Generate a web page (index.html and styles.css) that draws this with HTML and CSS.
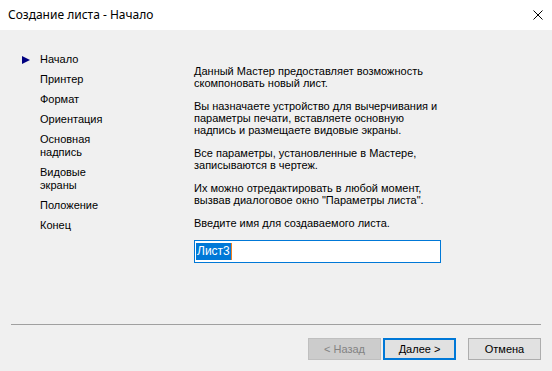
FILE: index.html
```html
<!DOCTYPE html>
<html lang="ru">
<head>
    <meta charset="UTF-8">
    <title>Создание листа - Начало</title>
    <link rel="stylesheet" href="styles.css">
</head>
<body>
    <div class="window">
        <div class="titlebar">
            <span class="title">Создание листа - Начало</span>
            <svg class="close" width="10" height="10" viewBox="0 0 10 10">
                <path d="M0.5 0.5 L9.5 9.5 M9.5 0.5 L0.5 9.5" stroke="#000" stroke-width="1" fill="none"/>
            </svg>
        </div>

        <div class="main">
            <ul class="steps">
                <li class="current"><span class="marker"></span>Начало</li>
                <li><span class="marker"></span>Принтер</li>
                <li><span class="marker"></span>Формат</li>
                <li><span class="marker"></span>Ориентация</li>
                <li><span class="marker"></span>Основная<br>надпись</li>
                <li><span class="marker"></span>Видовые<br>экраны</li>
                <li><span class="marker"></span>Положение</li>
                <li><span class="marker"></span>Конец</li>
            </ul>

            <div class="content">
                <p>Данный Мастер предоставляет возможность<br>скомпоновать новый лист.</p>
                <p>Вы назначаете устройство для вычерчивания и<br>параметры печати, вставляете основную<br>надпись и размещаете видовые экраны.</p>
                <p>Все параметры, установленные в Мастере,<br>записываются в чертеж.</p>
                <p>Их можно отредактировать в любой момент,<br>вызвав диалоговое окно "Параметры листа".</p>
                <p>Введите имя для создаваемого листа.</p>
                <div class="textbox"><span class="selected">Лист3</span><span class="caret"></span></div>
            </div>
        </div>

        <div class="footer">
            <div class="separator"></div>
            <div class="buttons">
                <button class="btn" disabled>&lt; Назад</button>
                <button class="btn default">Далее &gt;</button>
                <button class="btn cancel">Отмена</button>
            </div>
        </div>
    </div>
</body>
</html>
```

FILE: styles.css
```css
html, body {
    margin: 0;
    padding: 0;
}
body {
    font-family: "Liberation Sans", Arial, sans-serif;
    font-size: 11px;
    color: #000;
    background-color: #f0f0f0;
}
.window {
    display: flex;
    flex-direction: column;
    height: 371px;
    width: 552px;
}
.titlebar {
    height: 30px;
    background: white;
    display: flex;
    align-items: center;
    justify-content: space-between;
    padding: 0 9px 0 8px;
    flex-shrink: 0;
}
.title {
    font-family: "Noto Sans", "Open Sans", sans-serif;
    font-size: 12px;
    margin-top: -1px;
}
.close {
    display: block;
    margin-top: -1px;
}
.main {
    flex: 1;
    display: flex;
}
.steps {
    list-style: none;
    margin: 0;
    padding: 23px 0 0 22px;
    width: 172px;
}
.steps li {
    display: flex;
    align-items: flex-start;
    line-height: 13px;
    padding-bottom: 7px;
}
.marker {
    width: 18px;
    height: 13px;
    flex-shrink: 0;
    position: relative;
}
.steps li:not(.current) {
    padding-left: 18px;
}
.steps li:not(.current) .marker {
    display: none;
}
.current .marker::before {
    content: "";
    position: absolute;
    left: 0;
    top: 3px;
    border-left: 8px solid #000080;
    border-top: 4px solid transparent;
    border-bottom: 4px solid transparent;
}
.content {
    padding-top: 35px;
}
.content p {
    margin: 0 0 11px 0;
    line-height: 12px;
}
.textbox {
    width: 244px;
    height: 21px;
    border: 1px solid #0078d7;
    background: white;
    display: flex;
    align-items: center;
    padding-left: 1px;
}
.selected {
    background: #0078d7;
    color: white;
    font-size: 12px;
    line-height: 17px;
    padding: 0 1px;
}
.caret {
    width: 1px;
    height: 17px;
    background: #f08020;
}
.footer {
    flex-shrink: 0;
    padding-bottom: 11px;
}
.separator {
    margin: 0 11px;
    height: 1px;
    background: #a0a0a0;
}
.buttons {
    display: flex;
    justify-content: flex-end;
    margin-top: 13px;
    padding-right: 11px;
}
.btn {
    width: 73px;
    height: 22px;
    font-family: "Liberation Sans", Arial, sans-serif;
    font-size: 11px;
    color: #000;
    background: #e1e1e1;
    border: 1px solid #adadad;
    padding: 0;
}
.btn:disabled {
    background: #cccccc;
    border-color: #bfbfbf;
    color: #838383;
}
.btn.default {
    margin-left: 2px;
    border: 2px solid #0078d7;
}
.btn.cancel {
    margin-left: 12px;
}
```
